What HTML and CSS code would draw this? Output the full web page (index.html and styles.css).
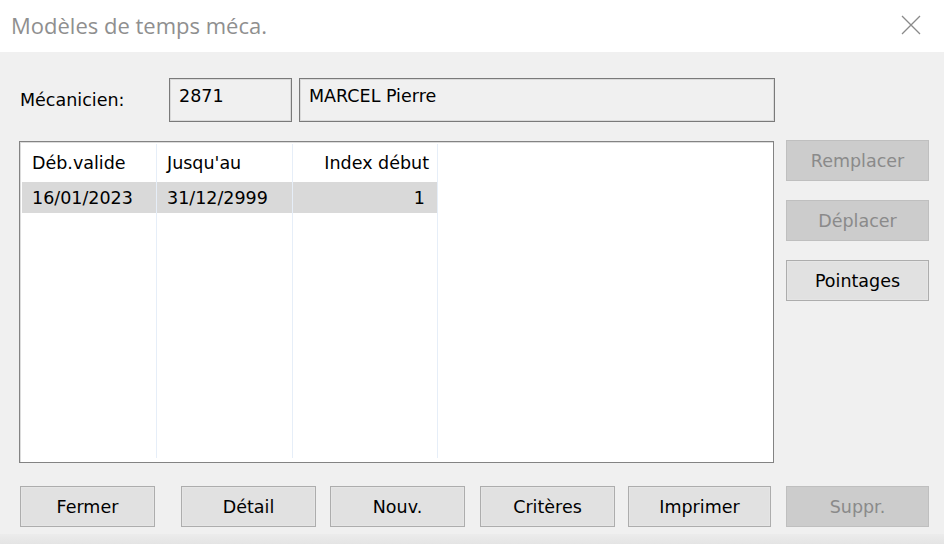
FILE: index.html
```html
<!DOCTYPE html>
<html lang="fr">
<head>
<meta charset="utf-8">
<title>Modèles de temps méca.</title>
<link rel="stylesheet" href="styles.css">
</head>
<body>
<div class="window">
  <div class="titlebar">
    <span class="title">Modèles de temps méca.</span>
    <svg class="close" width="20" height="20" viewBox="0 0 20 20"><path d="M1 1 L19 19 M19 1 L1 19" stroke="#8a8a8a" stroke-width="1.3" fill="none"/></svg>
  </div>
  <div class="content">
    <div class="row-meca">
      <span class="label">Mécanicien:</span>
      <div class="field field-code">2871</div>
      <div class="field field-name">MARCEL Pierre</div>
    </div>
    <div class="main">
      <div class="list">
        <div class="col col1">
          <div class="cell head">Déb.valide</div>
          <div class="cell sel">16/01/2023</div>
        </div>
        <div class="col col2">
          <div class="cell head">Jusqu'au</div>
          <div class="cell sel">31/12/2999</div>
        </div>
        <div class="col col3">
          <div class="cell head right">Index début</div>
          <div class="cell sel right">1</div>
        </div>
      </div>
      <div class="side">
        <button class="btn wide disabled">Remplacer</button>
        <button class="btn wide disabled">Déplacer</button>
        <button class="btn wide">Pointages</button>
      </div>
    </div>
    <div class="bottom">
      <button class="btn b-fermer">Fermer</button>
      <button class="btn b-detail">Détail</button>
      <button class="btn b-nouv">Nouv.</button>
      <button class="btn b-crit">Critères</button>
      <button class="btn wide b-impr">Imprimer</button>
      <button class="btn wide disabled b-suppr">Suppr.</button>
    </div>
  </div>
  <div class="footer"></div>
</div>
</body>
</html>
```
FILE: styles.css
```css
html, body {
  margin: 0;
  padding: 0;
}
body {
  width: 944px;
  height: 544px;
  overflow: hidden;
  background: #f0f0f0;
  font-family: "DejaVu Sans", Verdana, sans-serif;
  font-size: 17.5px;
  color: #000;
}
.window {
  display: flex;
  flex-direction: column;
  height: 544px;
}
.titlebar {
  height: 52px;
  background: #fff;
  display: flex;
  align-items: center;
  justify-content: space-between;
  padding: 0 23px 0 11px;
  box-sizing: border-box;
}
.title {
  font-family: "Open Sans", "Noto Sans", sans-serif;
  font-size: 22px;
  color: #8f8f8f;
  margin-top: -2px;
}
.close {
  margin-top: -3px;
}
.content {
  flex: 1;
  padding: 26px 0 0 19px;
}
.row-meca {
  display: flex;
  align-items: center;
  height: 44px;
}
.label {
  width: 150px;
  padding-left: 1px;
  padding-bottom: 1px;
  box-sizing: border-box;
}
.field {
  height: 44px;
  box-sizing: border-box;
  border: 1px solid #7a7a7a;
  box-shadow: inset 1px 1px 0 #dadada, inset -1px -1px 0 #dadada;
  background: #f0f0f0;
  padding: 7px 9px;
}
.field-code {
  width: 123px;
}
.field-name {
  width: 476px;
  margin-left: 7px;
}
.main {
  display: flex;
  margin-top: 19px;
  gap: 12px;
}
.list {
  width: 755px;
  height: 322px;
  box-sizing: border-box;
  border: 1px solid #838383;
  box-shadow: inset 1px 1px 0 #dcdcdc;
  background: #fff;
  display: flex;
  padding: 2px 0 4px 2px;
}
.col {
  display: flex;
  flex-direction: column;
  border-right: 1px solid #e6eef8;
}
.col1 { width: 134px; }
.col2 { width: 135px; }
.col3 { width: 144px; }
.cell {
  padding: 0 9px 0 10px;
  display: flex;
  align-items: center;
  white-space: nowrap;
}
.head {
  height: 38px;
}
.sel {
  height: 31px;
  background: #d9d9d9;
}
.right {
  justify-content: flex-end;
}
.col3 .cell { padding-right: 8px; }
.col3 .sel { padding-right: 12px; }
.side {
  display: flex;
  flex-direction: column;
  gap: 19px;
  margin-top: -1px;
}
.btn {
  font-family: "DejaVu Sans", Verdana, sans-serif;
  font-size: 17.5px;
  color: #000;
  background: #e1e1e1;
  border: 1px solid #adadad;
  box-shadow: inset 0 0 0 1px #e5e5e5;
  height: 41px;
  width: 135px;
  padding: 0;
  margin: 0;
  flex: none;
}
.btn.wide {
  width: 143px;
}
.btn.disabled {
  background: #cccccc;
  border-color: #bfbfbf;
  box-shadow: none;
  color: #8a8a8a;
}
.bottom {
  display: flex;
  margin-top: 23px;
}
.b-fermer { margin-left: 1px; }
.b-detail { margin-left: 26px; }
.b-nouv { margin-left: 14px; }
.b-crit { margin-left: 15px; }
.b-impr { margin-left: 13px; }
.b-suppr { margin-left: 15px; }
.footer {
  height: 10px;
  background: linear-gradient(#ececec, #e4e4e4);
}
```
